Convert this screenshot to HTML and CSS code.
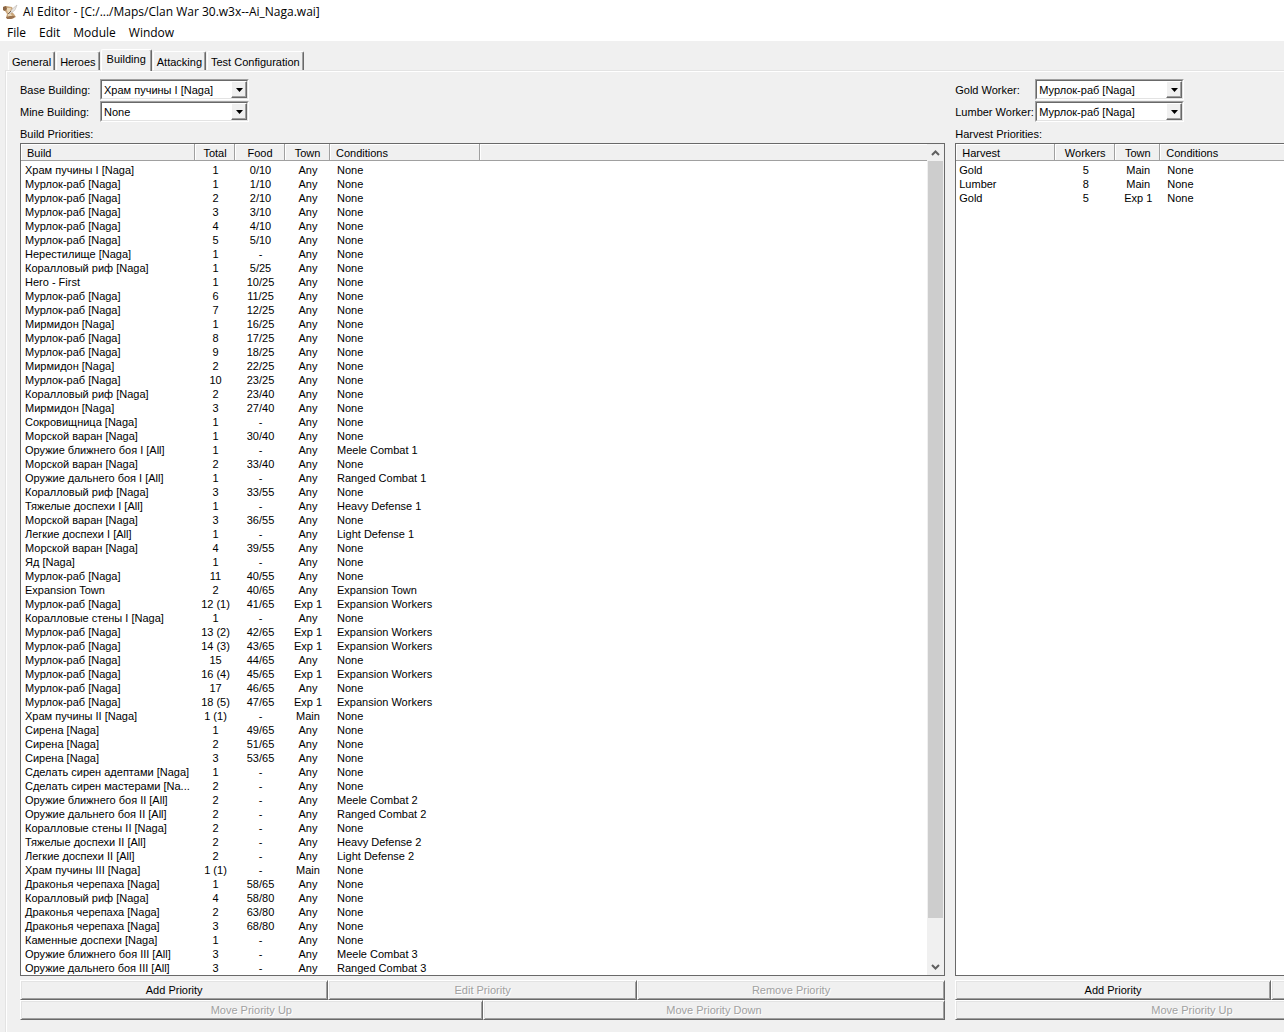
FILE: index.html
```html
<!DOCTYPE html>
<html lang="ru">
<head>
    <meta charset="UTF-8">
    <meta name="viewport" content="width=device-width, initial-scale=1.0">
    <title>AI Editor</title>
    <link rel="stylesheet" href="styles.css">
</head>
<body>

<div class="window">
    <header class="titlebar">
        <svg class="app-icon" width="16" height="16" viewBox="0 0 16 16">
            <path d="M1 3 L4 2 L10 3 L11 5 L10 8 L12 10 L14 13 L9 15 L4 14 L5 10 L3 7 L1 6 Z" fill="#c9a67c"/>
            <path d="M4 4 L9 4 L8 8 L10 12 L6 13 L6 9 Z" fill="#ead6b5"/>
            <path d="M1 3 L4 2 L5 5 L3 7 L1 6 Z" fill="#8a6544"/>
            <path d="M4 13 L8 12 L13 12 L12 14 L9 15 L5 15 Z" fill="#9b7350"/>
            <path d="M7 10 Q10 4 15 1 Q14 7 9 9 Z" fill="#e8e6e4" stroke="#b8b0a8" stroke-width="0.5"/>
            <path d="M6 10 L9 7" stroke="#5d4838" stroke-width="0.8"/>
        </svg>
        <span>AI Editor - [C:/.../Maps/Clan War 30.w3x--Ai_Naga.wai]</span>
    </header>

    <nav class="menubar">
        <button class="menu">File</button>
        <button class="menu">Edit</button>
        <button class="menu">Module</button>
        <button class="menu">Window</button>
    </nav>

    <div class="tabs">
        <button class="tab">General</button>
        <button class="tab">Heroes</button>
        <button class="tab active">Building</button>
        <button class="tab">Attacking</button>
        <button class="tab">Test Configuration</button>
    </div>

    <main class="page">
        <section class="pane">
            <div class="field">
                <label for="base">Base Building:</label>
                <div class="combo">
                    <select id="base"><option>Храм пучины I [Naga]</option></select>
                    <span class="drop"><svg width="7" height="4" viewBox="0 0 7 4"><path d="M0 0 H7 L3.5 4 Z"/></svg></span>
                </div>
            </div>
            <div class="field">
                <label for="mine">Mine Building:</label>
                <div class="combo">
                    <select id="mine"><option>None</option></select>
                    <span class="drop"><svg width="7" height="4" viewBox="0 0 7 4"><path d="M0 0 H7 L3.5 4 Z"/></svg></span>
                </div>
            </div>
            <h2 class="caption">Build Priorities:</h2>

            <div class="list">
                <div class="list-view">
                    <table>
                        <colgroup><col class="c-build"><col class="c-total"><col class="c-food"><col class="c-town"><col class="c-cond"><col></colgroup>
                        <thead>
                            <tr><th>Build</th><th>Total</th><th>Food</th><th>Town</th><th>Conditions</th><th></th></tr>
                        </thead>
                        <tbody>
                            <tr><td>Храм пучины I [Naga]</td><td>1</td><td>0/10</td><td>Any</td><td>None</td></tr>
                            <tr><td>Мурлок-раб [Naga]</td><td>1</td><td>1/10</td><td>Any</td><td>None</td></tr>
                            <tr><td>Мурлок-раб [Naga]</td><td>2</td><td>2/10</td><td>Any</td><td>None</td></tr>
                            <tr><td>Мурлок-раб [Naga]</td><td>3</td><td>3/10</td><td>Any</td><td>None</td></tr>
                            <tr><td>Мурлок-раб [Naga]</td><td>4</td><td>4/10</td><td>Any</td><td>None</td></tr>
                            <tr><td>Мурлок-раб [Naga]</td><td>5</td><td>5/10</td><td>Any</td><td>None</td></tr>
                            <tr><td>Нерестилище [Naga]</td><td>1</td><td>-</td><td>Any</td><td>None</td></tr>
                            <tr><td>Коралловый риф [Naga]</td><td>1</td><td>5/25</td><td>Any</td><td>None</td></tr>
                            <tr><td>Hero - First</td><td>1</td><td>10/25</td><td>Any</td><td>None</td></tr>
                            <tr><td>Мурлок-раб [Naga]</td><td>6</td><td>11/25</td><td>Any</td><td>None</td></tr>
                            <tr><td>Мурлок-раб [Naga]</td><td>7</td><td>12/25</td><td>Any</td><td>None</td></tr>
                            <tr><td>Мирмидон [Naga]</td><td>1</td><td>16/25</td><td>Any</td><td>None</td></tr>
                            <tr><td>Мурлок-раб [Naga]</td><td>8</td><td>17/25</td><td>Any</td><td>None</td></tr>
                            <tr><td>Мурлок-раб [Naga]</td><td>9</td><td>18/25</td><td>Any</td><td>None</td></tr>
                            <tr><td>Мирмидон [Naga]</td><td>2</td><td>22/25</td><td>Any</td><td>None</td></tr>
                            <tr><td>Мурлок-раб [Naga]</td><td>10</td><td>23/25</td><td>Any</td><td>None</td></tr>
                            <tr><td>Коралловый риф [Naga]</td><td>2</td><td>23/40</td><td>Any</td><td>None</td></tr>
                            <tr><td>Мирмидон [Naga]</td><td>3</td><td>27/40</td><td>Any</td><td>None</td></tr>
                            <tr><td>Сокровищница [Naga]</td><td>1</td><td>-</td><td>Any</td><td>None</td></tr>
                            <tr><td>Морской варан [Naga]</td><td>1</td><td>30/40</td><td>Any</td><td>None</td></tr>
                            <tr><td>Оружие ближнего боя I [All]</td><td>1</td><td>-</td><td>Any</td><td>Meele Combat 1</td></tr>
                            <tr><td>Морской варан [Naga]</td><td>2</td><td>33/40</td><td>Any</td><td>None</td></tr>
                            <tr><td>Оружие дальнего боя I [All]</td><td>1</td><td>-</td><td>Any</td><td>Ranged Combat 1</td></tr>
                            <tr><td>Коралловый риф [Naga]</td><td>3</td><td>33/55</td><td>Any</td><td>None</td></tr>
                            <tr><td>Тяжелые доспехи I [All]</td><td>1</td><td>-</td><td>Any</td><td>Heavy Defense 1</td></tr>
                            <tr><td>Морской варан [Naga]</td><td>3</td><td>36/55</td><td>Any</td><td>None</td></tr>
                            <tr><td>Легкие доспехи I [All]</td><td>1</td><td>-</td><td>Any</td><td>Light Defense 1</td></tr>
                            <tr><td>Морской варан [Naga]</td><td>4</td><td>39/55</td><td>Any</td><td>None</td></tr>
                            <tr><td>Яд [Naga]</td><td>1</td><td>-</td><td>Any</td><td>None</td></tr>
                            <tr><td>Мурлок-раб [Naga]</td><td>11</td><td>40/55</td><td>Any</td><td>None</td></tr>
                            <tr><td>Expansion Town</td><td>2</td><td>40/65</td><td>Any</td><td>Expansion Town</td></tr>
                            <tr><td>Мурлок-раб [Naga]</td><td>12 (1)</td><td>41/65</td><td>Exp 1</td><td>Expansion Workers</td></tr>
                            <tr><td>Коралловые стены I [Naga]</td><td>1</td><td>-</td><td>Any</td><td>None</td></tr>
                            <tr><td>Мурлок-раб [Naga]</td><td>13 (2)</td><td>42/65</td><td>Exp 1</td><td>Expansion Workers</td></tr>
                            <tr><td>Мурлок-раб [Naga]</td><td>14 (3)</td><td>43/65</td><td>Exp 1</td><td>Expansion Workers</td></tr>
                            <tr><td>Мурлок-раб [Naga]</td><td>15</td><td>44/65</td><td>Any</td><td>None</td></tr>
                            <tr><td>Мурлок-раб [Naga]</td><td>16 (4)</td><td>45/65</td><td>Exp 1</td><td>Expansion Workers</td></tr>
                            <tr><td>Мурлок-раб [Naga]</td><td>17</td><td>46/65</td><td>Any</td><td>None</td></tr>
                            <tr><td>Мурлок-раб [Naga]</td><td>18 (5)</td><td>47/65</td><td>Exp 1</td><td>Expansion Workers</td></tr>
                            <tr><td>Храм пучины II [Naga]</td><td>1 (1)</td><td>-</td><td>Main</td><td>None</td></tr>
                            <tr><td>Сирена [Naga]</td><td>1</td><td>49/65</td><td>Any</td><td>None</td></tr>
                            <tr><td>Сирена [Naga]</td><td>2</td><td>51/65</td><td>Any</td><td>None</td></tr>
                            <tr><td>Сирена [Naga]</td><td>3</td><td>53/65</td><td>Any</td><td>None</td></tr>
                            <tr><td>Сделать сирен адептами [Naga]</td><td>1</td><td>-</td><td>Any</td><td>None</td></tr>
                            <tr><td>Сделать сирен мастерами [Na...</td><td>2</td><td>-</td><td>Any</td><td>None</td></tr>
                            <tr><td>Оружие ближнего боя II [All]</td><td>2</td><td>-</td><td>Any</td><td>Meele Combat 2</td></tr>
                            <tr><td>Оружие дальнего боя II [All]</td><td>2</td><td>-</td><td>Any</td><td>Ranged Combat 2</td></tr>
                            <tr><td>Коралловые стены II [Naga]</td><td>2</td><td>-</td><td>Any</td><td>None</td></tr>
                            <tr><td>Тяжелые доспехи II [All]</td><td>2</td><td>-</td><td>Any</td><td>Heavy Defense 2</td></tr>
                            <tr><td>Легкие доспехи II [All]</td><td>2</td><td>-</td><td>Any</td><td>Light Defense 2</td></tr>
                            <tr><td>Храм пучины III [Naga]</td><td>1 (1)</td><td>-</td><td>Main</td><td>None</td></tr>
                            <tr><td>Драконья черепаха [Naga]</td><td>1</td><td>58/65</td><td>Any</td><td>None</td></tr>
                            <tr><td>Коралловый риф [Naga]</td><td>4</td><td>58/80</td><td>Any</td><td>None</td></tr>
                            <tr><td>Драконья черепаха [Naga]</td><td>2</td><td>63/80</td><td>Any</td><td>None</td></tr>
                            <tr><td>Драконья черепаха [Naga]</td><td>3</td><td>68/80</td><td>Any</td><td>None</td></tr>
                            <tr><td>Каменные доспехи [Naga]</td><td>1</td><td>-</td><td>Any</td><td>None</td></tr>
                            <tr><td>Оружие ближнего боя III [All]</td><td>3</td><td>-</td><td>Any</td><td>Meele Combat 3</td></tr>
                            <tr><td>Оружие дальнего боя III [All]</td><td>3</td><td>-</td><td>Any</td><td>Ranged Combat 3</td></tr>
                        </tbody>
                    </table>
                </div>
                <div class="scrollbar">
                    <button class="arrow" aria-label="Up"><svg width="9" height="6" viewBox="0 0 9 6"><path d="M1 5 L4.5 1.5 L8 5"/></svg></button>
                    <div class="track"><div class="thumb"></div></div>
                    <button class="arrow" aria-label="Down"><svg width="9" height="6" viewBox="0 0 9 6"><path d="M1 1 L4.5 4.5 L8 1"/></svg></button>
                </div>
            </div>

            <div class="actions">
                <button class="btn">Add Priority</button>
                <button class="btn" disabled>Edit Priority</button>
                <button class="btn" disabled>Remove Priority</button>
            </div>
            <div class="actions">
                <button class="btn" disabled>Move Priority Up</button>
                <button class="btn" disabled>Move Priority Down</button>
            </div>
        </section>

        <section class="pane">
            <div class="field">
                <label for="gold">Gold Worker:</label>
                <div class="combo">
                    <select id="gold"><option>Мурлок-раб [Naga]</option></select>
                    <span class="drop"><svg width="7" height="4" viewBox="0 0 7 4"><path d="M0 0 H7 L3.5 4 Z"/></svg></span>
                </div>
            </div>
            <div class="field">
                <label for="lumber">Lumber Worker:</label>
                <div class="combo">
                    <select id="lumber"><option>Мурлок-раб [Naga]</option></select>
                    <span class="drop"><svg width="7" height="4" viewBox="0 0 7 4"><path d="M0 0 H7 L3.5 4 Z"/></svg></span>
                </div>
            </div>
            <h2 class="caption">Harvest Priorities:</h2>

            <div class="list">
                <div class="list-view">
                    <table class="harvest">
                        <colgroup><col class="c-harvest"><col class="c-workers"><col class="c-town"><col></colgroup>
                        <thead>
                            <tr><th>Harvest</th><th>Workers</th><th>Town</th><th>Conditions</th></tr>
                        </thead>
                        <tbody>
                            <tr><td>Gold</td><td>5</td><td>Main</td><td>None</td></tr>
                            <tr><td>Lumber</td><td>8</td><td>Main</td><td>None</td></tr>
                            <tr><td>Gold</td><td>5</td><td>Exp 1</td><td>None</td></tr>
                        </tbody>
                    </table>
                </div>
            </div>

            <div class="actions">
                <button class="btn">Add Priority</button>
                <button class="btn" disabled></button>
                <button class="btn" disabled></button>
            </div>
            <div class="actions">
                <button class="btn" disabled>Move Priority Up</button>
                <button class="btn" disabled></button>
            </div>
        </section>
    </main>
</div>

</body>
</html>
```
FILE: styles.css
```css
* {
    box-sizing: border-box;
}
body {
    margin: 0;
    background: #f0f0f0;
    color: #000;
    font-family: "Liberation Sans", Arial, sans-serif;
    font-size: 11px;
    line-height: 14px;
}
button, select {
    font: inherit;
    color: inherit;
    border-radius: 0;
    margin: 0;
}
.window {
    display: flex;
    flex-direction: column;
    height: 100vh;
    overflow: hidden;
}

/* title and menu */
.titlebar, .menubar {
    display: flex;
    align-items: center;
    background: #fff;
    font-family: "Open Sans", "Noto Sans", sans-serif;
    font-size: 12px;
    line-height: 16px;
}
.titlebar {
    height: 24px;
    padding-left: 2px;
    gap: 5px;
}
.menubar {
    height: 17px;
}
.menu {
    border: 0;
    background: none;
    padding: 0 6px 0 7px;
}

/* tabs */
.tabs {
    display: flex;
    align-items: flex-end;
    height: 29px;
    padding-left: 8px;
    gap: 1px;
}
.tab {
    height: 19px;
    padding: 1px 3px 0;
    background: #f0f0f0;
    border: 1px solid #fff;
    border-right-color: #696969;
    border-bottom: 0;
    border-radius: 2px 2px 0 0;
    box-shadow: inset -1px 0 #a0a0a0;
}
.tab.active {
    position: relative;
    height: 22px;
    padding: 0 5px 3px;
    margin-bottom: -1px;
}

/* tab page */
.page {
    flex: 1;
    min-height: 0;
    display: grid;
    grid-template-columns: 73.2% 74.9%;
    grid-template-rows: 100%;
    gap: 10px;
    margin-left: 5px;
    padding: 8px 0 12px 14px;
    border: solid #e3e3e3;
    border-width: 1px 0 0 1px;
    box-shadow: inset 1px 1px #fff;
}
.pane {
    display: flex;
    flex-direction: column;
    min-width: 0;
}
.field {
    display: flex;
    height: 22px;
}
.field label {
    width: 80px;
    line-height: 22px;
    white-space: nowrap;
}
.combo {
    position: relative;
    width: 149px;
    height: 21px;
    border: 1px solid;
    border-color: #a0a0a0 #fff #fff #a0a0a0;
}
.combo select {
    display: block;
    width: 100%;
    height: 100%;
    padding: 1px 20px 0 2px;
    appearance: none;
    background: #fff;
    border: 1px solid;
    border-color: #696969 #e3e3e3 #e3e3e3 #696969;
}
.drop {
    position: absolute;
    top: 1px;
    right: 1px;
    bottom: 1px;
    width: 16px;
    display: flex;
    align-items: center;
    justify-content: center;
    background: #f0f0f0;
    border: 1px solid;
    border-color: #fff #696969 #696969 #fff;
    box-shadow: inset -1px -1px #a0a0a0;
    pointer-events: none;
}
.caption {
    height: 20px;
    margin: 0;
    padding-top: 4px;
    font-size: 11px;
    font-weight: normal;
}

/* list view */
.list {
    flex: 1;
    min-height: 0;
    display: flex;
    background: #fff;
    border: 1px solid #696969;
    margin-bottom: 4px;
}
.list-view {
    flex: 1;
    min-width: 0;
    overflow: hidden;
}
table {
    width: 100%;
    table-layout: fixed;
    border-collapse: separate;
    border-spacing: 0;
}
.c-build { width: 174px; }
.c-total { width: 40px; }
.c-food { width: 50px; }
.c-town { width: 45px; }
.c-cond { width: 150px; }
.c-harvest { width: 99px; }
.c-workers { width: 60px; }
th {
    height: 17px;
    padding: 2px 5px 0 6px;
    background: #f0f0f0;
    border-right: 1px solid #a0a0a0;
    border-bottom: 1px solid #a0a0a0;
    box-shadow: inset 1px 1px #fff;
    font-weight: normal;
    text-align: center;
}
th:last-child {
    border-right: 0;
}
td {
    height: 14px;
    padding: 0 0 0 1px;
    text-align: center;
    white-space: nowrap;
}
th:first-child, th:nth-child(5), .harvest th:nth-child(4) {
    text-align: left;
}
td:first-child {
    padding-left: 4px;
    text-align: left;
}
.harvest td:first-child {
    padding-left: 3px;
}
td:nth-child(5), .harvest td:nth-child(4) {
    padding-left: 7px;
    text-align: left;
}
tbody::before {
    content: "";
    display: block;
    height: 2px;
}

/* scrollbar */
.scrollbar {
    display: flex;
    flex-direction: column;
    width: 17px;
    background: #f0f0f0;
}
.arrow {
    display: flex;
    align-items: center;
    justify-content: center;
    height: 17px;
    padding: 0;
    border: 0;
    background: #f0f0f0;
}
.arrow path {
    fill: none;
    stroke: #606060;
    stroke-width: 2;
}
.track {
    flex: 1;
}
.thumb {
    height: 95%;
    margin: 0 1px;
    background: #cdcdcd;
}

/* buttons */
.actions {
    display: flex;
}
.btn {
    flex: 1;
    height: 20px;
    padding: 0;
    background: #f0f0f0;
    border: 1px solid;
    border-color: #fff #696969 #696969 #fff;
    box-shadow: inset 1px 1px #e3e3e3, inset -1px -1px #a0a0a0;
}
.btn:disabled {
    color: #a0a0a0;
    text-shadow: 1px 1px #fff;
}
```
